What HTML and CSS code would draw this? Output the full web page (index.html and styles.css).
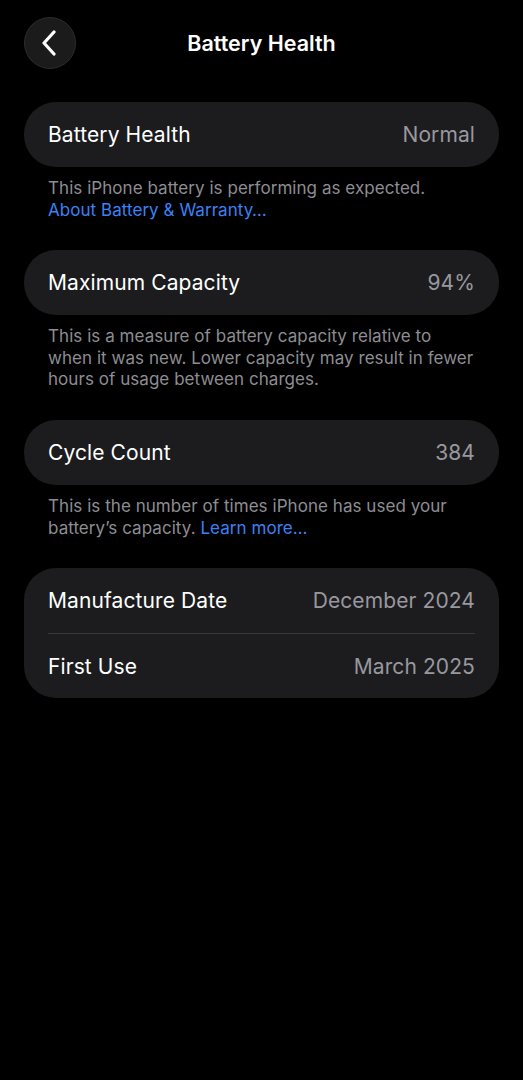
FILE: index.html
```html
<!DOCTYPE html>
<html lang="en">
<head>
    <meta charset="UTF-8">
    <meta name="viewport" content="width=device-width, initial-scale=1.0">
    <title>Battery Health</title>
    <link rel="stylesheet" href="styles.css">
</head>
<body>
    <div class="screen">
        <header class="nav">
            <button class="back" aria-label="Back">
                <svg width="16" height="26" viewBox="0 0 16 26">
                    <path d="M13 2 L3 13 L13 24" fill="none" stroke="#fff" stroke-width="3.2" stroke-linecap="round" stroke-linejoin="round"/>
                </svg>
            </button>
            <h1>Battery Health</h1>
        </header>

        <section class="group">
            <div class="card">
                <div class="row">
                    <span class="label">Battery Health</span>
                    <span class="value">Normal</span>
                </div>
            </div>
            <p class="note">This iPhone battery is performing as expected.<br><a href="#">About Battery &amp; Warranty…</a></p>
        </section>

        <section class="group">
            <div class="card">
                <div class="row">
                    <span class="label">Maximum Capacity</span>
                    <span class="value">94%</span>
                </div>
            </div>
            <p class="note">This is a measure of battery capacity relative to when it was new. Lower capacity may result in fewer hours of usage between charges.</p>
        </section>

        <section class="group">
            <div class="card">
                <div class="row">
                    <span class="label">Cycle Count</span>
                    <span class="value">384</span>
                </div>
            </div>
            <p class="note">This is the number of times iPhone has used your battery’s capacity. <a href="#">Learn more…</a></p>
        </section>

        <section class="group">
            <div class="card">
                <div class="row">
                    <span class="label">Manufacture Date</span>
                    <span class="value">December 2024</span>
                </div>
                <div class="row">
                    <span class="label">First Use</span>
                    <span class="value">March 2025</span>
                </div>
            </div>
        </section>
    </div>
</body>
</html>
```

FILE: styles.css
```css
body {
    margin: 0;
    background-color: #000;
    color: #fff;
    font-family: 'Inter', 'Noto Sans', sans-serif;
}
.screen {
    padding: 17px 24px 0;
}
.nav {
    position: relative;
    height: 52px;
    display: flex;
    align-items: center;
    justify-content: center;
    margin-bottom: 33px;
}
.back {
    position: absolute;
    left: 0;
    top: 0;
    width: 52px;
    height: 52px;
    border-radius: 50%;
    background-color: #1b1b1c;
    border: 1px solid #2c2c2e;
    display: flex;
    align-items: center;
    justify-content: center;
    padding: 0 3px 0 0;
}
.nav h1 {
    margin: 0;
    font-size: 21.5px;
    font-weight: 600;
}
.group {
    margin-bottom: 29px;
}
.card {
    background-color: #1c1c1e;
    border-radius: 32px;
    padding: 0 24px;
}
.row {
    height: 65px;
    display: flex;
    align-items: center;
    justify-content: space-between;
    font-size: 21px;
    letter-spacing: 0.1px;
}
.row + .row {
    height: 64px;
    border-top: 1px solid #38383a;
}
.value {
    color: #98989e;
}
.note {
    margin: 11px 22px 0 24px;
    font-size: 17px;
    line-height: 21.6px;
    color: #8d8d93;
    letter-spacing: 0.05px;
}
.note a {
    color: #3b82f6;
    text-decoration: none;
}
```
